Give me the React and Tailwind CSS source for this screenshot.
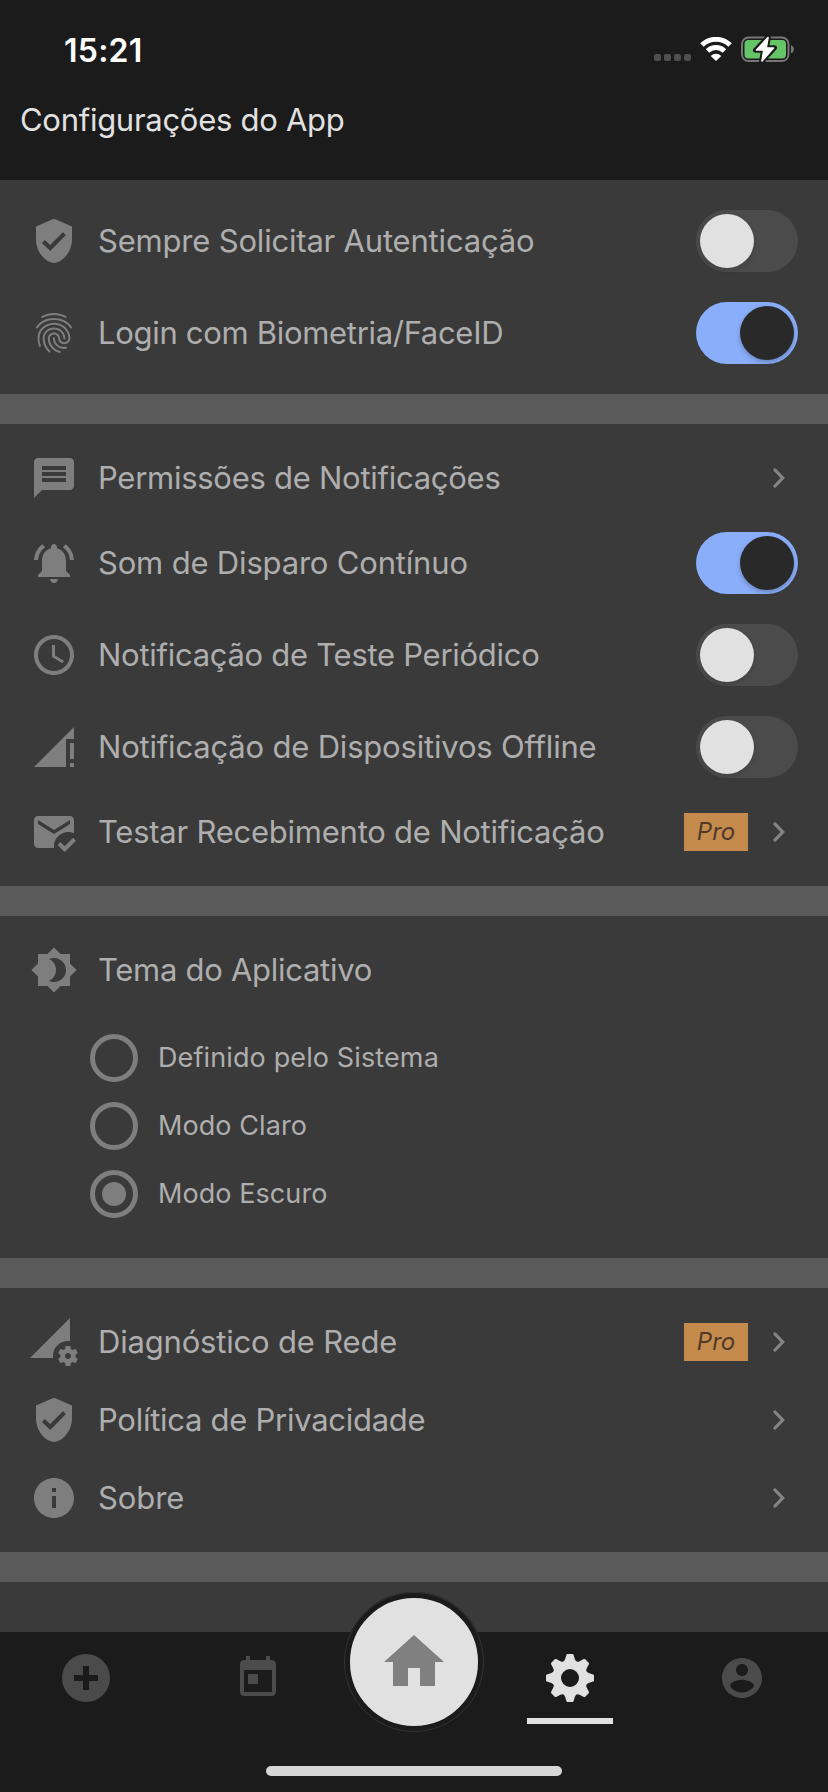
import React from "react";
import {
  MdFingerprint,
  MdMessage,
  MdNotificationsActive,
  MdMarkEmailRead,
} from "react-icons/md";

function Glyph({ d, className = "size-12", viewBox = "0 0 24 24" }) {
  return (
    <svg viewBox={viewBox} className={className} fill="currentColor" fillRule="evenodd">
      <path d={d} />
    </svg>
  );
}

const SIGNAL = "M20 18h2v-8h-2v8zm0 4h2v-2h-2v2zM2 22h16V8h4V2L2 22z";
const BRIGHTNESS =
  "M20 8.69V4h-4.69L12 .69 8.69 4H4v4.69L.69 12 4 15.31V20h4.69L12 23.31 15.31 20H20v-4.69L23.31 12 20 8.69zM12 18c-.89 0-1.74-.2-2.5-.55C11.56 16.5 13 14.42 13 12s-1.44-4.5-3.5-5.45C10.26 6.2 11.11 6 12 6c3.31 0 6 2.69 6 6s-2.69 6-6 6z";
const CLOCK =
  "M11.99 2C6.47 2 2 6.48 2 12s4.47 10 9.99 10C17.52 22 22 17.52 22 12S17.52 2 11.99 2zM12 20c-4.42 0-8-3.58-8-8s3.58-8 8-8 8 3.58 8 8-3.58 8-8 8zM12.5 7H11v6l5.25 3.15.75-1.23-4.5-2.67z";
const DATA_SETTING =
  "M18.99 11.5c.34 0 .67.03 1 .07L20 0 0 20h11.56c-.04-.33-.07-.66-.07-1 0-4.14 3.36-7.5 7.5-7.5zm3.71 7.99c.02-.16.04-.32.04-.49 0-.17-.01-.33-.04-.49l1.06-.83c.09-.08.12-.21.06-.32l-1-1.73c-.06-.11-.19-.15-.31-.11l-1.24.5c-.26-.2-.54-.37-.85-.49l-.19-1.32c-.01-.12-.12-.21-.24-.21h-2c-.12 0-.23.09-.25.21l-.19 1.32c-.3.13-.59.29-.85.49l-1.24-.5c-.11-.04-.24 0-.31.11l-1 1.73c-.06.11-.04.24.06.32l1.06.83c-.02.16-.03.32-.03.49 0 .17.01.33.03.49l-1.06.83c-.09.08-.12.21-.06.32l1 1.73c.06.11.19.15.31.11l1.24-.5c.26.2.54.37.85.49l.19 1.32c.02.12.12.21.25.21h2c.12 0 .23-.09.25-.21l.19-1.32c.3-.13.59-.29.84-.49l1.25.5c.11.04.24 0 .31-.11l1-1.73c.06-.11.03-.24-.06-.32l-1.07-.83zm-3.71 1.01c-.83 0-1.5-.67-1.5-1.5s.67-1.5 1.5-1.5 1.5.67 1.5 1.5-.67 1.5-1.5 1.5z";
const INFO = "M12 2C6.48 2 2 6.48 2 12s4.48 10 10 10 10-4.48 10-10S17.52 2 12 2zm1 15h-2v-6h2v6zm0-8h-2V7h2v2z";
const ADD = "M24 0a24 24 0 1 0 0 48a24 24 0 1 0 0-48zM21 12h6v9h9v6h-9v9h-6v-9h-9v-6h9z";
const TODAY =
  "M19 3h-1V1h-2v2H8V1H6v2H5c-1.11 0-1.99.9-1.99 2L3 19c0 1.1.89 2 2 2h14c1.1 0 2-.9 2-2V5c0-1.1-.9-2-2-2zm0 16H5V8h14v11zM7 10h5v5H7z";
const HOME = "M10 20v-6h4v6h5v-8h3L12 3 2 12h3v8z";
const ACCOUNT =
  "M12 2C6.48 2 2 6.48 2 12s4.48 10 10 10 10-4.48 10-10S17.52 2 12 2zm0 3c1.66 0 3 1.34 3 3s-1.34 3-3 3-3-1.34-3-3 1.34-3 3-3zm0 14.2c-2.5 0-4.71-1.28-6-3.22.03-1.99 4-3.08 6-3.08 1.99 0 5.97 1.09 6 3.08-1.29 1.94-3.5 3.22-6 3.22z";

function Shield() {
  return (
    <svg viewBox="0 0 48 48" className="size-12">
      <path fill="currentColor" d="M22.6 2.3Q24 1.7 25.4 2.3L42 9.6V22C42 33 35.5 42.6 26.6 45.6Q24 46.5 21.4 45.6C12.5 42.6 6 33 6 22V9.6Z" />
      <path fill="none" stroke="#3a3a3a" strokeWidth="4.2" d="M13.4 24.4L20.2 31L34.4 16.6" />
    </svg>
  );
}

function Gear() {
  return (
    <svg viewBox="-24 -24 48 48" className="size-12" fill="currentColor">
      {[0, 45, 90, 135, 180, 225, 270, 315].map((a) => (
        <path
          key={a}
          transform={`rotate(${a})`}
          d="M-7.5 -15.5Q-5.6 -17 -5 -18.6L-3.6 -23.1Q-3.3 -24 -2.4 -24L2.4 -24Q3.3 -24 3.6 -23.1L5 -18.6Q5.6 -17 7.5 -15.5Z"
        />
      ))}
      <circle r="13.2" fill="none" stroke="currentColor" strokeWidth="8.4" />
    </svg>
  );
}

function Chevron() {
  return (
    <svg viewBox="0 0 12 20" className="h-5 w-3 shrink-0" fill="none" stroke="#858585" strokeWidth="3.2" strokeLinecap="round" strokeLinejoin="miter">
      <path d="M2 2L9.7 10L2 18" />
    </svg>
  );
}

function Toggle({ on }) {
  return (
    <div className={`flex h-[62px] w-[102px] shrink-0 rounded-full p-1 ${on ? "justify-end bg-[#8aaefa]" : "justify-start bg-[#4b4b4b]"}`}>
      <div className={`size-[54px] rounded-full ${on ? "bg-[#292929] shadow-[0_2px_5px_rgba(0,0,0,0.25)]" : "bg-[#e1e1e1] shadow-[0_2px_5px_rgba(0,0,0,0.15)]"}`} />
    </div>
  );
}

function Row({ icon, label, spacing = "", toggle, pro, arrow }) {
  return (
    <div className={`flex items-center px-[30px] ${toggle ? "h-[92px]" : "h-[78px]"}`}>
      <div className="flex size-12 shrink-0 items-center justify-center text-[#7e7e7e]">{icon}</div>
      <div className={`ml-5 flex-1 text-[31px] leading-[38px] whitespace-nowrap text-[#aeaeae] ${spacing}`}>{label}</div>
      {toggle && <Toggle on={toggle === "on"} />}
      {pro && (
        <div className="flex h-[38px] w-16 shrink-0 items-center justify-center bg-[#c48b4d] text-[24px] text-[#4f3a29] italic">Pro</div>
      )}
      {arrow && (
        <div className="mr-[13px] ml-[25px]">
          <Chevron />
        </div>
      )}
    </div>
  );
}

function Radio({ label, checked, spacing = "" }) {
  return (
    <div className="flex h-[68px] items-center pl-[90px]">
      <div className="flex size-12 items-center justify-center rounded-full border-[5px] border-[#7e7e7e]">
        {checked && <div className="size-6 rounded-full bg-[#7e7e7e]" />}
      </div>
      <div className={`ml-5 text-[27px] leading-8 text-[#aeaeae] ${spacing}`}>{label}</div>
    </div>
  );
}

function StatusBar() {
  return (
    <div className="flex h-[98px] items-center pr-[33px] pl-[64px] text-white">
      <div className="pt-[3px] text-[32px] leading-[38px] font-semibold tracking-[0.25px]">15:21</div>
      <div className="ml-auto flex items-center">
        <div className="mt-[17px] flex gap-[3px]">
          {[0, 1, 2, 3].map((i) => (
            <div key={i} className="size-[7px] rounded-[2px] bg-[#4f4f4f]" />
          ))}
        </div>
        <svg viewBox="0 0 32 24" className="ml-[9px] h-6 w-8" fill="none" stroke="white" strokeWidth="4.9">
          <path d="M1.9 8.1A20 20 0 0 1 30.1 8.1" />
          <path d="M7.6 13.9A12 12 0 0 1 24.4 13.9" />
          <path d="M16 24L10.7 18.9A7.6 7.6 0 0 1 21.3 18.9Z" fill="white" stroke="none" />
        </svg>
        <svg viewBox="0 0 54 28" className="ml-[9px] h-7 w-[54px]">
          <rect x="1" y="2.5" width="46.5" height="23.5" rx="6.5" fill="none" stroke="#767678" strokeWidth="2" />
          <rect x="3.5" y="5" width="41.5" height="18.5" rx="4" fill="#65c466" />
          <path d="M50 10Q53 11.5 53 14.2T50 18.6Z" fill="#767678" />
          <path d="M27.5 1.5L14.5 15.2H22.5L20.5 27L33.5 12.7H25.5Z" fill="white" stroke="#1b1b1b" strokeWidth="5" strokeLinejoin="round" />
          <path d="M27 2.5L15.5 15H22.8L21 26L32.5 13H25.2Z" fill="white" stroke="white" strokeWidth="1.6" strokeLinejoin="round" />
        </svg>
      </div>
    </div>
  );
}

export default function App() {
  return (
    <div className="flex h-[1792px] w-[828px] flex-col overflow-hidden bg-[#3a3a3a] font-['Inter','Liberation_Sans',sans-serif]">
      <header className="h-[180px] shrink-0 bg-[#1b1b1b]">
        <StatusBar />
        <h1 className="pl-5 text-[31px] leading-[44px] font-normal tracking-[-0.28px] text-[#e1e1e1]">Configurações do App</h1>
      </header>

      <main className="flex flex-1 flex-col gap-[30px] bg-[#5a5a5a]">
        <section className="bg-[#3a3a3a] py-[15px]">
          <Row icon={<Shield />} label="Sempre Solicitar Autenticação" spacing="tracking-[-0.19px]" toggle="off" />
          <Row icon={<MdFingerprint className="size-12" />} label="Login com Biometria/FaceID" spacing="tracking-[-0.31px]" toggle="on" />
        </section>
        <section className="bg-[#3a3a3a] py-[15px]">
          <Row icon={<MdMessage className="size-12" />} label="Permissões de Notificações" spacing="tracking-[-0.27px]" arrow />
          <Row icon={<MdNotificationsActive className="size-12" />} label="Som de Disparo Contínuo" spacing="tracking-[-0.18px]" toggle="on" />
          <Row icon={<Glyph d={CLOCK} />} label="Notificação de Teste Periódico" spacing="tracking-[-0.28px]" toggle="off" />
          <Row icon={<Glyph d={SIGNAL} />} label="Notificação de Dispositivos Offline" spacing="tracking-[-0.19px]" toggle="off" />
          <Row icon={<MdMarkEmailRead className="size-12" />} label="Testar Recebimento de Notificação" spacing="tracking-[-0.24px]" pro arrow />
        </section>
        <section className="bg-[#3a3a3a] pt-[15px] pb-[30px]">
          <Row icon={<Glyph d={BRIGHTNESS} />} label="Tema do Aplicativo" spacing="tracking-[-0.28px]" />
          <div className="mt-[15px]">
            <Radio label="Definido pelo Sistema" spacing="tracking-[0.12px]" />
            <Radio label="Modo Claro" spacing="tracking-[0.07px]" />
            <Radio label="Modo Escuro" spacing="tracking-[0.07px]" checked />
          </div>
        </section>
        <section className="bg-[#3a3a3a] py-[15px]">
          <Row icon={<Glyph d={DATA_SETTING} />} label="Diagnóstico de Rede" spacing="tracking-[-0.18px]" pro arrow />
          <Row icon={<Shield />} label="Política de Privacidade" spacing="tracking-[-0.27px]" arrow />
          <Row icon={<Glyph d={INFO} />} label="Sobre" spacing="tracking-[-0.1px]" arrow />
        </section>
        <section className="flex-1 bg-[#3a3a3a]" />
      </main>

      <nav className="flex h-[160px] shrink-0 flex-col bg-[#1b1b1b]">
        <div className="flex h-[92px] text-[#4b4b4b]">
          <div className="flex w-[172px] items-center justify-center"><Glyph d={ADD} viewBox="0 0 48 48" /></div>
          <div className="flex w-[172px] items-center justify-center"><Glyph d={TODAY} /></div>
          <div className="relative w-[140px]">
            <div className="absolute -top-10 left-0 flex size-[140px] items-center justify-center rounded-full border-[6px] border-[#1b1b1b] bg-[#e1e1e1] text-[#808080] outline outline-1 -outline-offset-1 outline-[#333333]">
              <Glyph d={HOME} className="size-[72px]" />
            </div>
          </div>
          <div className="relative flex w-[172px] items-center justify-center text-[#e1e1e1]">
            <Gear />
            <div className="absolute top-[86px] left-[43px] h-1.5 w-[86px] bg-[#e1e1e1]" />
          </div>
          <div className="flex w-[172px] items-center justify-center"><Glyph d={ACCOUNT} /></div>
        </div>
        <div className="mx-auto mt-[42px] h-2.5 w-[296px] rounded-full bg-[#d6d6d6]" />
      </nav>
    </div>
  );
}
